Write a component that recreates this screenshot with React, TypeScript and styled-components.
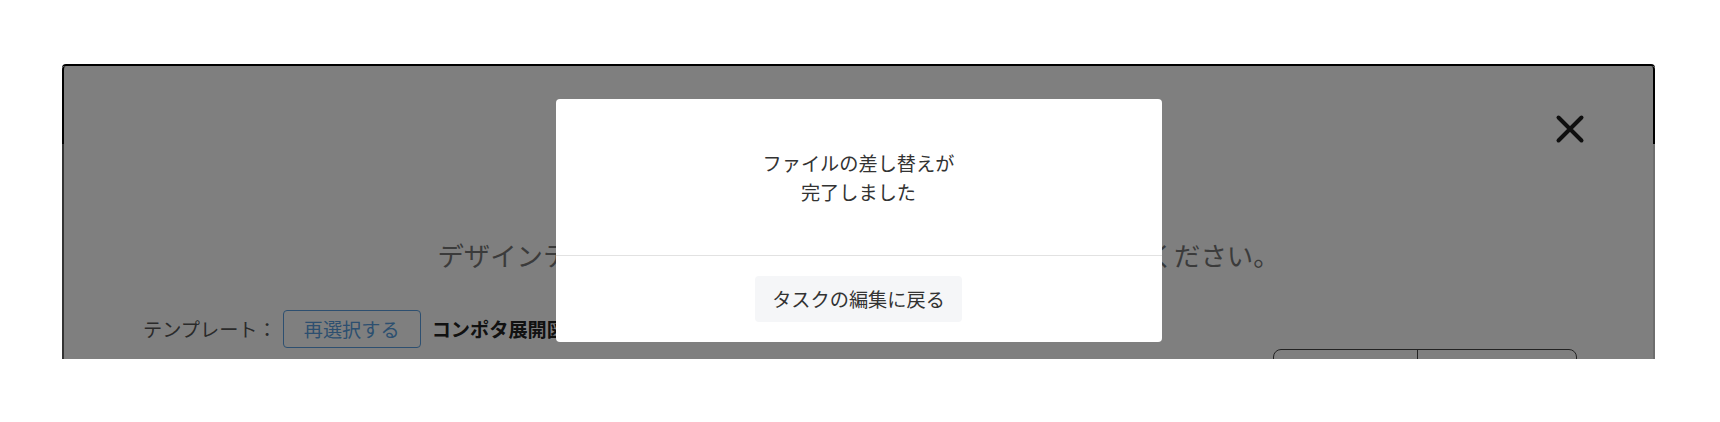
import React from 'react';
import styled, {createGlobalStyle} from 'styled-components';

const GlobalStyle = createGlobalStyle`
  html, body {
    margin: 0;
    padding: 0;
    background: #fff;
  }
  body {
    font-family: "Noto Sans CJK JP", "Noto Sans", sans-serif;
    color: #333;
  }
  * {
    box-sizing: border-box;
  }
`;

const App = () => {
  return (
    <>
      <GlobalStyle/>
      <Page>
        <Frame>
          <Header>
            <CloseButton aria-label="閉じる">
              <svg width="30" height="30" viewBox="0 0 30 30" fill="none">
                <path d="M3.5 3.5 L26.5 26.5 M26.5 3.5 L3.5 26.5" stroke="#1e1e1e" strokeWidth="4" strokeLinecap="round"/>
              </svg>
            </CloseButton>
          </Header>
          <Body>
            <Heading>デザインテンプレートを選択しファイルをアップロードしてください。</Heading>
            <TemplateRow>
              <Label>テンプレート：</Label>
              <OutlineButton>再選択する</OutlineButton>
              <TemplateName>コンポタ展開図テンプレート_A4.ai</TemplateName>
            </TemplateRow>
            <ToggleRow>
              <Segmented>
                <Segment $width={143}/>
                <Segment $width={159}/>
              </Segmented>
            </ToggleRow>
          </Body>

          <Overlay>
            <Modal>
              <ModalBody>
                <Message>ファイルの差し替えが<br/>完了しました</Message>
              </ModalBody>
              <ModalFooter>
                <BackButton>タスクの編集に戻る</BackButton>
              </ModalFooter>
            </Modal>
          </Overlay>
        </Frame>
      </Page>
    </>
  )
}

export default App;

const Page = styled.div`
  width: 1720px;
  height: 422px;
  padding: 64px 0 0 62px;
  overflow: hidden;
`;
const Frame = styled.div`
  position: relative;
  width: 1593px;
  height: 295px;
  border-top: 2px solid #000;
  border-radius: 4px 4px 0 0;
  overflow: hidden;
  background: #fff;
  display: flex;
  flex-direction: column;
`;
const Header = styled.div`
  height: 82px;
  display: flex;
  justify-content: flex-end;
  padding: 48px 68px 0 0;
  border-left: 2px solid #000;
  border-right: 2px solid #000;
  border-radius: 4px 4px 0 0;
`;
const CloseButton = styled.button`
  width: 30px;
  height: 30px;
  padding: 0;
  border: none;
  background: none;
  display: flex;
`;
const Body = styled.div`
  flex: 1;
  padding: 91px 76px 0 79px;
  border-left: 2px solid #666;
  border-right: 2px solid #ddd;
`;
const Heading = styled.p`
  margin: 0 0 0 -3px;
  text-align: center;
  font-size: 26.4px;
  line-height: 40px;
  color: #777;
  white-space: nowrap;
`;
const TemplateRow = styled.div`
  display: flex;
  align-items: center;
  margin-top: 35px;
  height: 38px;
`;
const Label = styled.span`
  font-size: 19.2px;
  color: #555;
  margin-right: 6px;
`;
const OutlineButton = styled.button`
  height: 38px;
  padding: 0 20px;
  border: 1px solid #5a9fe0;
  border-radius: 4px;
  background: #fff;
  color: #5a9fe0;
  font-family: inherit;
  font-size: 19.2px;
  display: flex;
  align-items: center;
`;
const TemplateName = styled.span`
  margin-left: 11px;
  font-size: 19.2px;
  font-weight: 700;
  color: #222;
  white-space: nowrap;
`;
const ToggleRow = styled.div`
  display: flex;
  justify-content: flex-end;
  margin-top: 1px;
`;
const Segmented = styled.div`
  display: flex;
  border: 1px solid #444;
  border-radius: 8px;
  overflow: hidden;
  height: 44px;
`;
const Segment = styled.div<{ $width: number }>`
  width: ${p => p.$width}px;
  & + & {
    border-left: 1px solid #444;
  }
`;
const Overlay = styled.div`
  position: absolute;
  inset: 0;
  background: rgba(0, 0, 0, 0.5);
  display: flex;
  justify-content: center;
  align-items: flex-start;
  padding-top: 33px;
`;
const Modal = styled.div`
  width: 606px;
  background: #fff;
  border-radius: 4px;
  display: flex;
  flex-direction: column;
`;
const ModalBody = styled.div`
  height: 157px;
  display: flex;
  align-items: center;
  justify-content: center;
  padding-top: 2px;
  border-bottom: 1px solid #e2e2e2;
`;
const Message = styled.p`
  margin: 0;
  text-align: center;
  font-size: 19.2px;
  line-height: 29px;
  color: #333;
`;
const ModalFooter = styled.div`
  display: flex;
  justify-content: center;
  padding: 20px;
`;
const BackButton = styled.button`
  height: 46px;
  padding: 0 17px;
  border: none;
  border-radius: 4px;
  background: #f5f6f8;
  color: #333;
  font-family: inherit;
  font-size: 19.2px;
`;
